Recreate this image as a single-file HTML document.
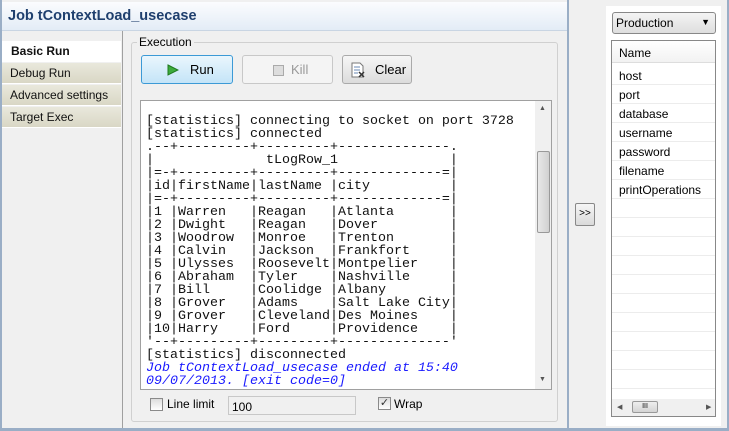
<!DOCTYPE html><html><head><style>
*{margin:0;padding:0;box-sizing:border-box}
body{width:729px;height:431px;overflow:hidden;background:#9aaec6;font-family:"Liberation Sans",sans-serif;font-size:12px;position:relative}
.abs{position:absolute}
#main{left:2px;top:0;width:565px;height:428px;background:#f0f0f0}
#title{left:2px;top:2px;width:565px;height:29px;background:linear-gradient(#fbfcfe,#e3ecf6);border-bottom:1px solid #c9d5e3;font-weight:bold;font-size:14.5px;color:#1f3f6e;padding:6px 0 0 6px}
.tab{left:2px;width:119px;height:21px;background:linear-gradient(#e9e8dc,#d9d7c5);border-bottom:1px solid #fff;padding:3px 0 0 8px;font-size:12px;color:#111}
#vline{left:122px;top:31px;width:1px;height:397px;background:#a0a0a0}
#grp{left:131px;top:42px;width:427px;height:380px;border:1px solid #d0d0d0;border-radius:3px}
.btn{height:29px;border:1px solid #aaa;border-radius:3px;background:linear-gradient(#f6f6f6,#dcdcdc);font-size:13px;padding-top:6px}
#console{left:140px;top:100px;width:412px;height:290px;background:#fff;border:1px solid #a0a0a0;overflow:hidden}
pre{position:absolute;left:5px;top:14px;font-family:"Liberation Mono",monospace;font-size:13.33px;line-height:13px;color:#111}
.blue{color:#1a1aff;font-style:italic}
#sb{left:535px;top:101px;width:16px;height:288px;background:#f0f0f0}
.cb{width:13px;height:13px;border:1px solid #8a8a8a;background:linear-gradient(#ddd,#fff)}
#right{left:569px;top:0;width:158px;height:428px;background:#f0f0f0}
.row{left:612px;width:103px;height:19px;border-bottom:1px solid #ececec;padding:3px 0 0 7px;font-size:12px}
</style></head><body>
<div id="main" class="abs"></div>
<div id="title" class="abs">Job tContextLoad_usecase</div>
<div class="abs tab" style="top:41px;background:#fff;font-weight:bold;padding-left:9px">Basic Run</div>
<div class="abs tab" style="top:63px">Debug Run</div>
<div class="abs tab" style="top:85px">Advanced settings</div>
<div class="abs tab" style="top:107px">Target Exec</div>
<div id="vline" class="abs"></div>
<div id="grp" class="abs"></div>
<div class="abs" style="left:137px;top:35px;background:#f0f0f0;padding:0 2px;font-size:12px">Execution</div>
<div class="abs btn" style="left:141px;top:55px;width:92px;border-color:#3c9ad6;background:linear-gradient(#eaf6fd,#c4e4f8);padding-left:26px"><svg class="abs" style="left:25px;top:8px" width="12" height="12"><path d="M1 1L11 6L1 11Z" fill="#3cab3c" stroke="#1f7a1f"/></svg><span style="margin-left:22px">Run</span></div>
<div class="abs btn" style="left:242px;top:55px;width:91px;border-color:#c8c8c8;background:#f4f4f4;color:#999"><span class="abs" style="left:30px;top:9px;width:11px;height:11px;border:1px solid #aaa;background:#ddd"></span><span style="margin-left:48px">Kill</span></div>
<div class="abs btn" style="left:342px;top:55px;width:70px"><svg class="abs" style="left:7px;top:6px" width="16" height="16"><path d="M2 1h8l3 3v11H2z" fill="#fff" stroke="#777"/><path d="M4 5h6M4 8h6M4 11h4" stroke="#6a8ab5"/><path d="M9 10l5 5M14 10l-5 5" stroke="#333" stroke-width="1.5"/></svg><span style="margin-left:32px">Clear</span></div>
<div id="console" class="abs"><pre>[statistics] connecting to socket on port 3728
[statistics] connected
.--+---------+---------+--------------.
|              tLogRow_1              |
|=-+---------+---------+-------------=|
|id|firstName|lastName |city          |
|=-+---------+---------+-------------=|
|1 |Warren   |Reagan   |Atlanta       |
|2 |Dwight   |Reagan   |Dover         |
|3 |Woodrow  |Monroe   |Trenton       |
|4 |Calvin   |Jackson  |Frankfort     |
|5 |Ulysses  |Roosevelt|Montpelier    |
|6 |Abraham  |Tyler    |Nashville     |
|7 |Bill     |Coolidge |Albany        |
|8 |Grover   |Adams    |Salt Lake City|
|9 |Grover   |Cleveland|Des Moines    |
|10|Harry    |Ford     |Providence    |
'--+---------+---------+--------------'
[statistics] disconnected
<span class="blue">Job tContextLoad_usecase ended at 15:40
09/07/2013. [exit code=0]</span></pre></div>
<div id="sb" class="abs"><div class="abs" style="left:2px;top:50px;width:13px;height:82px;border:1px solid #999;border-radius:2px;background:linear-gradient(90deg,#e8e8e8,#d0d0d0)"></div><div class="abs" style="left:4px;top:4px;font-size:7px;color:#555">▲</div><div class="abs" style="left:4px;top:275px;font-size:7px;color:#555">▼</div></div>
<div class="abs cb" style="left:150px;top:398px"></div>
<div class="abs" style="left:167px;top:397px;font-size:12px">Line limit</div>
<div class="abs" style="left:228px;top:396px;width:128px;height:19px;border:1px solid #c8c8c8;background:#f0f0f0;padding:3px 0 0 3px;font-size:12px">100</div>
<div class="abs cb" style="left:378px;top:397px;text-align:center;font-size:11px;line-height:11px;color:#333">✓</div>
<div class="abs" style="left:394px;top:397px;font-size:12px">Wrap</div>
<div id="right" class="abs"></div>
<div class="abs" style="left:606px;top:6px;width:115px;height:420px;background:#fff"></div>
<div class="abs" style="left:612px;top:12px;width:104px;height:22px;border:1px solid #888;border-radius:3px;background:linear-gradient(#f4f4f4,#dedede);padding:3px 0 0 3px;font-size:12px">Production<span class="abs" style="right:5px;top:4px;font-size:9px">▼</span></div>
<div class="abs" style="left:611px;top:40px;width:105px;height:377px;border:1px solid #888"></div>
<div class="abs" style="left:612px;top:41px;width:103px;height:22px;background:linear-gradient(#fff,#f2f2f2);border-bottom:1px solid #ddd;padding:5px 0 0 7px;font-size:12px">Name</div>
<div class="abs row" style="top:66px">host</div>
<div class="abs row" style="top:85px">port</div>
<div class="abs row" style="top:104px">database</div>
<div class="abs row" style="top:123px">username</div>
<div class="abs row" style="top:142px">password</div>
<div class="abs row" style="top:161px">filename</div>
<div class="abs row" style="top:180px">printOperations</div>
<div class="abs row" style="top:199px"></div><div class="abs row" style="top:218px"></div><div class="abs row" style="top:237px"></div><div class="abs row" style="top:256px"></div><div class="abs row" style="top:275px"></div><div class="abs row" style="top:294px"></div><div class="abs row" style="top:313px"></div><div class="abs row" style="top:332px"></div><div class="abs row" style="top:351px"></div><div class="abs row" style="top:370px"></div>
<div class="abs" style="left:612px;top:399px;width:103px;height:17px;background:#f0f0f0"><span class="abs" style="left:5px;top:4px;font-size:7px;color:#555">◀</span><div class="abs" style="left:20px;top:2px;width:26px;height:12px;border:1px solid #999;border-radius:2px;background:linear-gradient(#eee,#d4d4d4);font-size:7px;text-align:center;line-height:10px">III</div><span class="abs" style="left:94px;top:4px;font-size:7px;color:#555">▶</span></div>
<div class="abs" style="left:575px;top:203px;width:20px;height:23px;border:1px solid #888;border-radius:2px;background:linear-gradient(#f6f6f6,#dadada);font-size:10px;text-align:center;line-height:20px">&gt;&gt;</div>
</body></html>
